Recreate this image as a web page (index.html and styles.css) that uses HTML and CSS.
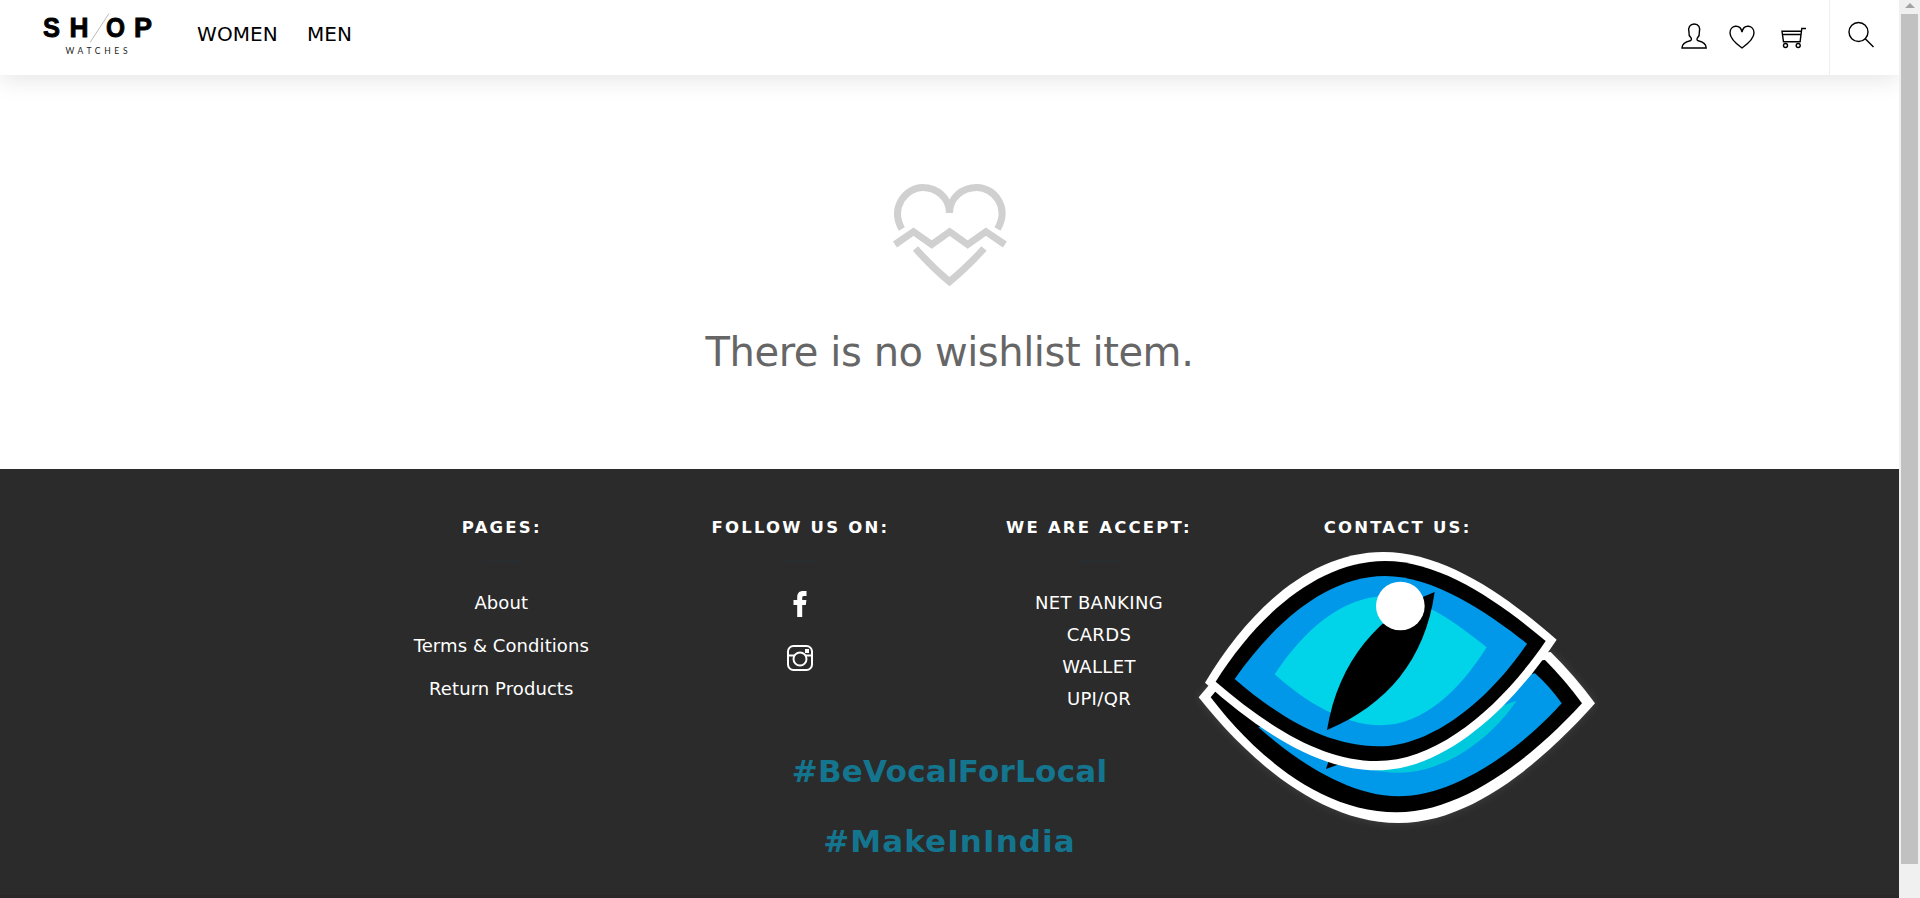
FILE: index.html
```html
<!DOCTYPE html>
<html lang="en">
<head>
<meta charset="utf-8">
<title>Shop Watches</title>
<link rel="stylesheet" href="styles.css">
</head>
<body>
<div class="window">
  <div class="page">
    <header class="header">
      <a class="logo">
        <svg class="logo-art" viewBox="0 0 120 50" width="120" height="50">
          <g class="logo-name"><text x="2" y="27" textLength="17" lengthAdjust="spacingAndGlyphs">S</text><text x="28.500" y="27" textLength="19" lengthAdjust="spacingAndGlyphs">H</text><text x="65" y="27" textLength="19" lengthAdjust="spacingAndGlyphs">O</text><text x="93" y="27" textLength="18" lengthAdjust="spacingAndGlyphs">P</text></g>
          <path class="logo-slash" d="M49 32.500 68 3.500"/>
          <text class="logo-sub" x="24.500" y="43.700" textLength="62">WATCHES</text>
        </svg>
      </a>
      <nav class="nav"><a>WOMEN</a><a>MEN</a></nav>
      <div class="tools">
        <svg class="icon-user" viewBox="0 0 28 28" width="28" height="28"><path d="M2 26c0-3.800 3.300-6 8.200-7.200 1.400-.5 1.600-1.900.6-3.300C9.400 14.300 8.700 12.500 9 10.500 7.600 5.500 10 2 14.300 2c4.200 0 6.400 3.500 5 8.500.3 2-.4 3.800-1.700 5.200-1 1.400-.7 2.600.6 3.100 4.900 1.200 8 3.400 8 7.200z"/></svg>
        <svg class="icon-heart" viewBox="0 0 28 28" width="28" height="28"><path d="M14 24C7.500 19.300 2 14.500 2 9 2 .8 12.300-.3 14 8 15.700-.3 26 .8 26 9c0 5.500-5.500 10.300-12 15z"/></svg>
        <svg class="icon-cart" viewBox="0 0 28 28" width="28" height="28"><path d="M26 3.500h-4.200l-1.700 13.200H3.500L2 6.300h19.500M2.500 9.500h18.300"/><circle cx="5.500" cy="20.500" r="2"/><circle cx="18.200" cy="20.500" r="2"/></svg>
        <button class="search" aria-label="Search"><svg viewBox="0 0 28 28" width="28" height="28"><circle cx="11.500" cy="12" r="9.500"/><path d="m18 18.500 8.500 8.500"/></svg></button>
      </div>
    </header>

    <main class="empty">
      <svg class="empty-icon" viewBox="0 0 120 110" width="120" height="110">
        <path d="M11.800 49C-.2 27 16 7.500 32.500 7.500 47 7.500 59.500 18 59.500 33 59.500 18 72 7.500 87 7.500c17 0 33 19.500 20.500 41.500"/>
        <path d="m5 64.500 18.500-12.800 18.200 12.800 18-12.800 18 12.800 18.200-12.800 19 12.800"/>
        <path d="M25.500 68.500q17 19.300 34 33.200 17-13.900 34.500-33.200"/>
      </svg>
      <p class="empty-text">There is no wishlist item.</p>
    </main>

    <footer class="footer">
      <div class="columns">
        <section class="column">
          <h4>PAGES:</h4><hr>
          <ul class="links"><li>About</li><li>Terms &amp; Conditions</li><li>Return Products</li></ul>
        </section>
        <section class="column">
          <h4>FOLLOW US ON:</h4><hr class="short">
          <div class="social">
            <svg viewBox="0 0 28 28" width="28" height="28"><path class="solid" d="M11.200 27v-12H7.500v-5h3.700V7.200C11.200 3 13.500 1 17 1H20.500v5H18C16.500 6 16.200 6.700 16.200 8v2h4.200l-.6 5h-3.600v12z"/></svg>
            <svg viewBox="0 0 28 28" width="28" height="28"><rect class="line" x="2" y="2" width="24" height="24" rx="5.500"/><circle class="line" cx="14" cy="15" r="6.500"/><path class="line" d="M2 11.500h6.500m11 0H26"/><path class="solid" d="M19 5h4v4h-4z"/></svg>
          </div>
        </section>
        <section class="column">
          <h4>WE ARE ACCEPT:</h4><hr>
          <ul class="payments"><li>NET BANKING</li><li>CARDS</li><li>WALLET</li><li>UPI/QR</li></ul>
        </section>
        <section class="column">
          <h4>CONTACT US:</h4>
          <svg class="eye" viewBox="0 0 1290 930" width="430" height="310">
            <defs><filter id="glow" x="-10%" y="-10%" width="120%" height="120%"><feDropShadow dx="0" dy="0" stdDeviation="12" flood-color="#777" flood-opacity=".3"/></filter></defs>
            <g filter="url(#glow)">
              <path fill="#fff" d="M56 502 100 450 1112 366Q1185 438 1245 520C1110 670 890 879 655 879 410 879 190 672 56 502z"/>
              <path fill="#000" d="M92 502 110 480 1095 390Q1155 450 1206 520C1060 680 850 847 650 847 420 847 220 670 92 502z"/>
              <path fill="#0298e9" d="M235 592 1065 430Q1110 470 1145 520C1000 680 810 799 655 799 510 799 350 695 235 592z"/>
              <path fill="#05c9de" d="M500 690 1010 512C930 630 790 728 660 728 590 728 540 715 500 690z"/>
              <path fill="#000" d="m438 717 10-30 40 12z"/>
            </g>
            <path fill="#fff" d="M75 458C215 225 400 66 610 66 790 66 970 190 1130 329 1010 510 810 721 590 721 420 721 245 610 75 458z"/>
            <path fill="#000" d="M107 455C235 250 420 93 615 93 780 93 950 210 1097 333 970 520 780 693 590 693 430 693 270 595 107 455z"/>
            <path fill="#0298e9" d="M164 447C280 280 440 138 615 138 760 138 920 245 1041 341 930 505 760 649 595 649 440 649 295 560 164 447z"/>
            <path fill="#01d3e9" d="M284 433C370 300 490 198 620 198 720 198 830 280 920 352 840 480 730 586 602 586 490 586 375 515 284 433z"/>
            <path fill="#000" d="M764 186C735 390 620 525 441 600 475 390 600 250 764 186z"/>
            <circle cx="661" cy="228" r="73" fill="#fff"/>
          </svg>
        </section>
      </div>
      <div class="tags"><p class="tag-local">#BeVocalForLocal</p><p class="tag-india">#MakeInIndia</p></div>
      <div class="bottom-bar"></div>
    </footer>
  </div>
  <div class="scrollbar"><span class="arrow"></span><span class="thumb"></span></div>
</div>
</body>
</html>
```

FILE: styles.css
```css
* { box-sizing: border-box; }
body { margin: 0; background: #fff; font-family: Verdana, "DejaVu Sans", sans-serif; overflow: hidden; }
ul { list-style: none; margin: 0; padding: 0; }
p, h4 { margin: 0; }

.window { display: flex; height: 898px; }
.page { display: flex; flex-direction: column; width: 1899px; }

.header { display: flex; height: 75px; background: #fff; box-shadow: 0 5px 22px rgba(0, 0, 0, .1); padding-left: 41px; }
.logo { width: 156px; padding-top: 10px; }
.logo-art { display: block; }
.logo-name { font: bold 27px "Liberation Sans", Arial, sans-serif; stroke: #000; stroke-width: .9; }
.logo-sub { font: 8.5px Lato, sans-serif; fill: #222; }
.logo-slash { stroke: #aaa; stroke-width: .8; fill: none; }
.nav { display: flex; gap: 29px; padding-top: 22px; font-size: 20px; line-height: 24px; letter-spacing: .1px; color: #000; }
.tools { display: flex; margin-left: auto; fill: none; stroke: #000; stroke-width: 1.4; }
.icon-user { margin: 22px 20px 0 0; }
.icon-heart { margin: 24px 24px 0 0; }
.icon-cart { margin: 25px 21px 0 0; }
.search { display: block; width: 70px; height: 75px; margin: 0; padding: 0 8px 4px 0; border: 0; border-left: 1px solid #eee; background: none; fill: none; stroke: #000; stroke-width: 1.4; }

.empty { display: flex; flex-direction: column; align-items: center; height: 394px; padding-top: 105px; }
.empty-icon { fill: none; stroke: #d0d0d0; stroke-width: 7; }
.empty-text { margin-top: 38px; font-size: 40px; line-height: 48px; letter-spacing: -.43px; color: #666; white-space: nowrap; }

.footer { height: 429px; background: #2b2b2b; color: #fff; }
.columns { display: grid; grid-template-columns: repeat(4, 298.6px); width: 1194px; height: 280px; margin: 0 auto; padding-top: 48px; text-align: center; }
.column { display: flex; flex-direction: column; align-items: center; }
.column h4 { font-size: 16.5px; line-height: 22px; letter-spacing: 2.2px; white-space: nowrap; }
.column hr { width: 40px; height: 1px; margin: 22px 0 0; border: 0; background: #233038; }
.column hr.short { width: 32px; }
.column li { white-space: nowrap; }
.links { padding: 19px 1px 0 0; font-size: 18px; letter-spacing: .08px; }
.links li { line-height: 43px; }
.payments { padding-top: 25px; font-size: 18px; letter-spacing: .35px; }
.payments li { line-height: 32px; }
.social { display: flex; flex-direction: column; gap: 26px; padding: 28px 1px 0 0; }
.social svg { display: block; }
.social .solid { fill: #fff; }
.social .line { fill: none; stroke: #fff; stroke-width: 2; }
.eye { flex: none; margin: -9px 0 0 -5px; }
.tags { height: 144px; padding-top: 3px; text-align: center; color: #14758f; font-size: 31px; font-weight: bold; line-height: 38px; }
.tag-local { letter-spacing: .25px; }
.tag-india { margin-top: 32px; letter-spacing: 1.1px; }
.bottom-bar { height: 5px; border-top: 2px solid #2b2b2b; background: #292727; }

.scrollbar { display: flex; flex-direction: column; align-items: center; width: 21px; background: #f0f0f0; padding-top: 3px; }
.arrow { width: 0; height: 0; border: 5px solid transparent; border-top: 0; border-bottom-color: #a3a3a3; }
.thumb { width: 17px; height: 850px; margin-top: 6px; background: #c1c1c1; }
```
